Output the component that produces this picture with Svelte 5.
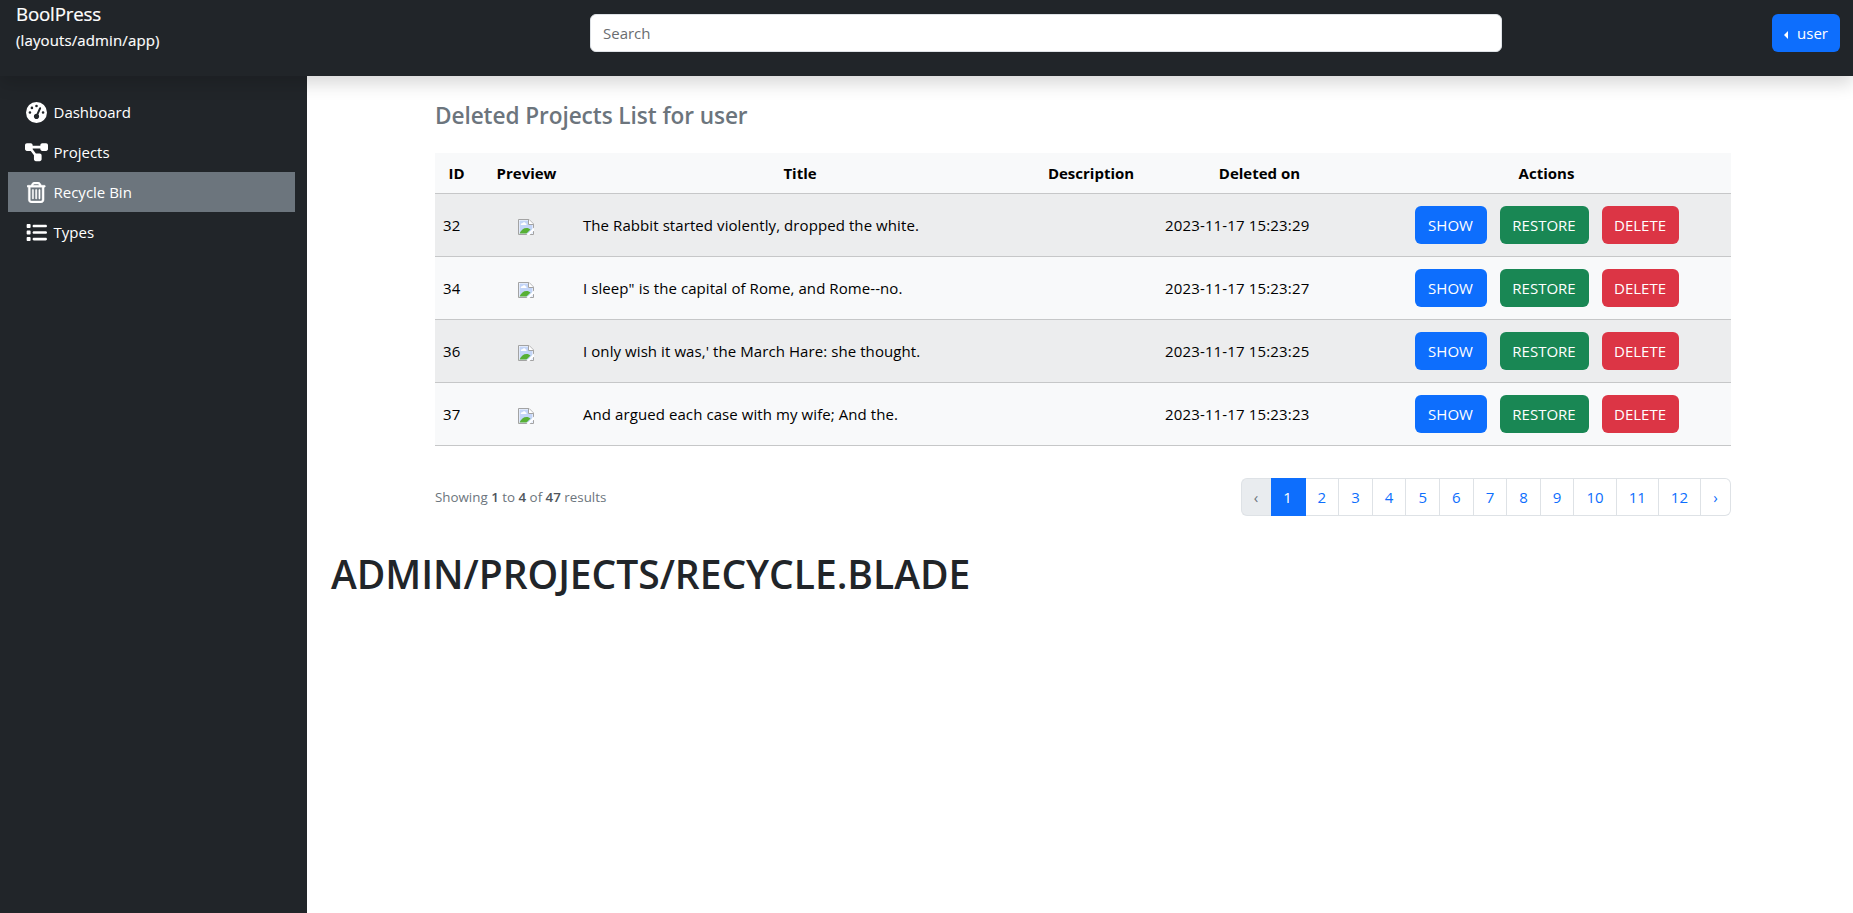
<script>
  const nav = [
    { label: 'Dashboard', icon: 'gauge' },
    { label: 'Projects', icon: 'diagram' },
    { label: 'Recycle Bin', icon: 'trash', active: true },
    { label: 'Types', icon: 'list' }
  ];
  const projects = [
    { id: 32, title: 'The Rabbit started violently, dropped the white.', date: '2023-11-17 15:23:29' },
    { id: 34, title: 'I sleep" is the capital of Rome, and Rome--no.', date: '2023-11-17 15:23:27' },
    { id: 36, title: "I only wish it was,' the March Hare: she thought.", date: '2023-11-17 15:23:25' },
    { id: 37, title: 'And argued each case with my wife; And the.', date: '2023-11-17 15:23:23' }
  ];
  const pages = [1, 2, 3, 4, 5, 6, 7, 8, 9, 10, 11, 12];
</script>

<header>
  <div class="brand">
    <div class="name">BoolPress</div>
    <div class="sub">(layouts/admin/app)</div>
  </div>
  <input type="text" placeholder="Search" />
  <button class="btn primary user"><i class="caret"></i><span>user</span></button>
</header>

<div class="body">
  <nav>
    {#each nav as item}
      <a class:active={item.active} href="#top">
        <span class="ico">
          {#if item.icon === 'gauge'}
            <svg width="21" height="21" viewBox="0 0 512 512"><path fill="currentColor" d="M0 256a256 256 0 1 1 512 0A256 256 0 1 1 0 256zM288 96a32 32 0 1 0-64 0 32 32 0 1 0 64 0zM256 416c35.300 0 64-28.700 64-64 0-17.400-6.900-33.100-18.100-44.600L366 161.700c5.300-12.100-.200-26.300-12.300-31.600s-26.300 .200-31.600 12.300L257.900 288c-.600 0-1.300 0-1.900 0-35.300 0-64 28.700-64 64s28.700 64 64 64zM176 144a32 32 0 1 0-64 0 32 32 0 1 0 64 0zM96 288a32 32 0 1 0 0-64 32 32 0 1 0 0 64zm352-32a32 32 0 1 0-64 0 32 32 0 1 0 64 0z"/></svg>
          {:else if item.icon === 'diagram'}
            <svg width="23" height="20.500" viewBox="0 0 576 512"><path fill="currentColor" d="M0 80C0 53.500 21.500 32 48 32h96c26.500 0 48 21.500 48 48v16h192V80c0-26.500 21.500-48 48-48h96c26.500 0 48 21.500 48 48v96c0 26.500-21.500 48-48 48h-96c-26.500 0-48-21.500-48-48v-16H192v16c0 1.700-.1 3.400-.3 5L272 288h96c26.500 0 48 21.500 48 48v96c0 26.500-21.500 48-48 48h-96c-26.500 0-48-21.500-48-48v-96c0-1.700 .1-3.400 .3-5L144 224H48c-26.500 0-48-21.500-48-48V80z"/></svg>
          {:else if item.icon === 'trash'}
            <svg width="18.400" height="21" viewBox="0 0 448 512"><path fill="currentColor" stroke="currentColor" stroke-width="10" d="M170.500 51.600L151.500 80h145l-19-28.400c-1.500-2.200-4-3.600-6.700-3.600h-93.700c-2.700 0-5.200 1.300-6.700 3.600zm147-26.600L354.200 80H424c13.300 0 24 10.700 24 24s-10.700 24-24 24h-8v304c0 44.200-35.800 80-80 80H112c-44.200 0-80-35.800-80-80V128h-8c-13.300 0-24-10.700-24-24s10.700-24 24-24h69.800l36.700-55.100C140.900 9.400 158.400 0 177.100 0h93.700c18.700 0 36.200 9.400 46.600 24.900zM80 128v304c0 17.700 14.300 32 32 32h224c17.700 0 32-14.300 32-32V128H80zm80 64v208c0 8.800-7.200 16-16 16s-16-7.200-16-16V192c0-8.800 7.200-16 16-16s16 7.200 16 16zm80 0v208c0 8.800-7.200 16-16 16s-16-7.200-16-16V192c0-8.800 7.200-16 16-16s16 7.200 16 16zm80 0v208c0 8.800-7.200 16-16 16s-16-7.200-16-16V192c0-8.800 7.200-16 16-16s16 7.200 16 16z"/></svg>
          {:else}
            <svg width="21" height="21" viewBox="0 0 512 512"><path fill="currentColor" d="M40 48c-13.300 0-24 10.700-24 24v48c0 13.300 10.700 24 24 24h48c13.300 0 24-10.700 24-24V72c0-13.300-10.700-24-24-24H40zM192 64c-17.700 0-32 14.300-32 32s14.300 32 32 32h288c17.700 0 32-14.300 32-32s-14.300-32-32-32H192zm0 160c-17.700 0-32 14.300-32 32s14.300 32 32 32h288c17.700 0 32-14.300 32-32s-14.300-32-32-32H192zm0 160c-17.700 0-32 14.300-32 32s14.300 32 32 32h288c17.700 0 32-14.300 32-32s-14.300-32-32-32H192zM16 232v48c0 13.300 10.700 24 24 24h48c13.300 0 24-10.700 24-24v-48c0-13.300-10.700-24-24-24H40c-13.300 0-24 10.700-24 24zm24 136c-13.300 0-24 10.700-24 24v48c0 13.300 10.700 24 24 24h48c13.300 0 24-10.700 24-24v-48c0-13.300-10.700-24-24-24H40z"/></svg>
          {/if}
        </span>
        <span>{item.label}</span>
      </a>
    {/each}
  </nav>

  <main>
    <section>
      <h4>Deleted Projects List for user</h4>
      <table>
        <colgroup>
          <col style="width:43px" /><col style="width:97px" /><col style="width:450px" />
          <col style="width:132px" /><col style="width:205px" /><col style="width:369px" />
        </colgroup>
        <thead>
          <tr><th>ID</th><th>Preview</th><th>Title</th><th>Description</th><th>Deleted on</th><th>Actions</th></tr>
        </thead>
        <tbody>
          {#each projects as p}
            <tr>
              <td>{p.id}</td>
              <td class="preview">
                <svg width="16" height="16" viewBox="0 0 16 16">
                  <path d="M.5 .5H11L15.500 5v10.500H.5z" fill="#fff" />
                  <path d="M1.500 1.500h9v4.500h4v8.500h-13z" fill="#c3d5f8" />
                  <path d="M3 6c-.8-1 .4-2 1.400-1.700C5 2.800 7.400 3 7.700 4.500 9 4.700 8.900 6 8 6z" fill="#fff" />
                  <path d="M1.500 14.500C3 11 5.500 9 8.500 9c1.800 0 3 .6 4 1.500L8.500 14.500z" fill="#57b035" />
                  <path d="M.5 15.500V.5H11L15.500 5v10.500z" fill="none" stroke="#a3a3a3" />
                  <path d="M10.500 .5V5.500h5" fill="#fff" stroke="#a3a3a3" />
                  <path d="M8.500 16L16 8.500v3L11.500 16z" fill="#fff" />
                </svg>
              </td>
              <td>{p.title}</td>
              <td></td>
              <td class="date">{p.date}</td>
              <td>
                <div class="actions">
                  <button class="btn primary show">SHOW</button>
                  <button class="btn success restore">RESTORE</button>
                  <button class="btn danger delete">DELETE</button>
                </div>
              </td>
            </tr>
          {/each}
        </tbody>
      </table>
      <div class="foot">
        <p>Showing <b>1</b> to <b>4</b> of <b>47</b> results</p>
        <ul>
          <li class="disabled">‹</li>
          {#each pages as n}
            <li class:current={n === 1} class:wide={n > 9}>{n}</li>
          {/each}
          <li class="last">›</li>
        </ul>
      </div>
    </section>
    <h1>ADMIN/PROJECTS/RECYCLE.BLADE</h1>
  </main>
</div>

<style>
  :global(body) { margin: 0; background: #fff; overflow: hidden; }
  :global(#app) { font: 15px/24px "Open Sans", "Noto Sans", sans-serif; color: #212529; }
  * { box-sizing: border-box; }
  header {
    position: relative; z-index: 2; height: 76px; background: #212529; color: #fff;
    display: flex; align-items: flex-start; padding: 0 13px 0 16px;
    box-shadow: 0 8px 16px rgba(0, 0, 0, .15);
  }
  .brand { width: 574px; }
  .name { font-size: 18.700px; line-height: 28px; letter-spacing: -.15px; -webkit-text-stroke: .2px; }
  .sub { line-height: 24px; letter-spacing: .12px; -webkit-text-stroke: .15px; }
  input {
    width: 912px; height: 38px; margin-top: 14px; padding: 6px 12px; border: 1px solid #dee2e6;
    border-radius: 6px; font: inherit; background: #fff;
  }
  input::placeholder { color: #6a6d70; opacity: 1; }
  .btn {
    height: 38px; padding: 0; border: 0; border-radius: 6px; color: #fff; font: inherit;
    display: flex; align-items: center; justify-content: center;
  }
  .primary { background: #0d6efd; }
  .success { background: #198754; }
  .danger { background: #dc3545; }
  .user { width: 68px; margin: 14px 0 0 auto; gap: 9px; }
  .caret { border: 4px solid transparent; border-left: 0; border-right-color: #fff; margin-top: 3px; }
  .body { display: flex; height: 837px; }
  nav { width: 307px; background: #212529; padding: 16px 12px 0 8px; }
  nav a { display: flex; align-items: center; height: 40px; padding-left: 16px; color: #fff; text-decoration: none; }
  nav a.active { background: #6c757d; }
  .ico { width: 25px; margin-right: 4.500px; display: flex; justify-content: center; }
  main { flex: 1; }
  section { width: 1296px; margin-left: 128px; padding-top: 25px; }
  h4 { margin: 0 0 23px; font-size: 22.600px; line-height: 29px; font-weight: 600; letter-spacing: -.07px; color: #6c757d; }
  table { width: 1296px; table-layout: fixed; border-collapse: separate; border-spacing: 0; color: #000; }
  th, td { padding: 0 8px; border-bottom: 1px solid #c6c7c8; background: #f8f9fa; text-align: left; white-space: nowrap; }
  th { height: 41px; text-align: center; font-weight: 700; }
  td { height: 63px; letter-spacing: .08px; }
  .date { letter-spacing: .15px; }
  tbody tr:nth-child(odd) td { background: #ecedee; }
  .preview svg { display: block; margin: 4px 0 0 32px; }
  .actions { display: flex; justify-content: center; gap: 13px; }
  .show { width: 72px; }
  .restore { width: 89px; }
  .delete { width: 77px; }
  .foot { display: flex; justify-content: space-between; align-items: center; margin-top: 32px; height: 38px; }
  p { margin: 0; font-size: 13.350px; color: #6c757d; }
  b { font-weight: 600; color: #50565c; }
  ul { display: flex; list-style: none; margin: 0; padding: 0; }
  li {
    width: 33.620px; height: 38px; display: flex; align-items: center; justify-content: center;
    border: 1px solid #dee2e6; border-left: 0; color: #0d6efd;
  }
  li.wide { width: 42.200px; }
  li.disabled { width: 30px; border: 1px solid #dee2e6; border-right: 0; background: #e9ecef; color: #6c757d; border-radius: 6px 0 0 6px; }
  li.current { width: 35px; background: #0d6efd; border-color: #0d6efd; color: #fff; }
  li.last { width: 30px; border-radius: 0 6px 6px 0; }
  h1 { margin: 34px 0 0 24px; font-size: 39px; line-height: 48px; font-weight: 600; letter-spacing: -.04px; white-space: nowrap; }
</style>
